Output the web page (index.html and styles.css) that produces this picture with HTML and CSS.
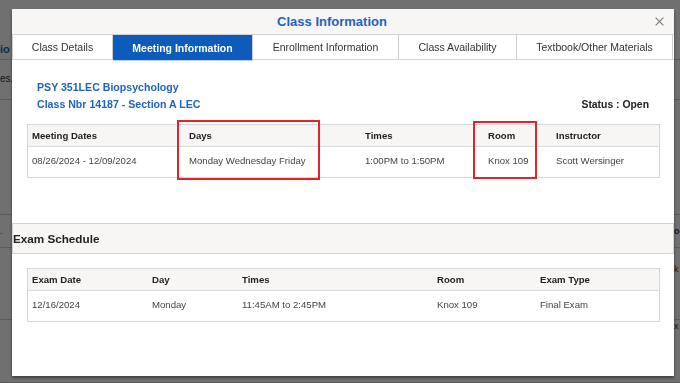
FILE: index.html
```html
<!DOCTYPE html>
<html lang="en">
<head>
<meta charset="utf-8">
<title>Class Information</title>
<link rel="stylesheet" href="styles.css">
</head>
<body>
<div class="page">
  <div class="bg-row r1"><span class="bg-link">io</span><span></span></div>
  <div class="bg-row r2"><span class="bg-text">es,</span><span></span></div>
  <div class="bg-row r3"><span></span><span></span></div>
  <div class="bg-row r4"><span class="bg-text">.</span><span class="bg-text bold">o</span></div>
  <div class="bg-row r5"><span></span><span class="bg-text">k</span></div>
  <div class="bg-row r6"><span></span><span class="bg-text">x</span></div>
</div>
<div class="overlay"></div>

<div class="modal" role="dialog" aria-label="Class Information">
  <div class="modal-head">
    <div class="modal-title">Class Information</div>
    <span class="close" aria-label="Close">
      <svg width="9" height="9" viewBox="0 0 9 9"><path d="M0.6 0.6 L8.4 8.4 M8.4 0.6 L0.6 8.4" stroke="#7a7a7a" stroke-width="1.1" fill="none"/></svg>
    </span>
  </div>
  <div class="tabs">
    <div class="tab">Class Details</div>
    <div class="tab active">Meeting Information</div>
    <div class="tab">Enrollment Information</div>
    <div class="tab">Class Availability</div>
    <div class="tab">Textbook/Other Materials</div>
  </div>

  <div class="section">
    <div class="course">
      <div class="course-row"><span>PSY 351LEC Biopsychology</span></div>
      <div class="course-row"><span>Class Nbr 14187 - Section A LEC</span><span class="status">Status : Open</span></div>
    </div>
    <div class="gtable meet">
      <div class="grow ghead">
        <div class="gcell">Meeting Dates</div>
        <div class="gcell">Days</div>
        <div class="gcell">Times</div>
        <div class="gcell">Room</div>
        <div class="gcell">Instructor</div>
      </div>
      <div class="grow gdata">
        <div class="gcell">08/26/2024 - 12/09/2024</div>
        <div class="gcell">Monday Wednesday Friday</div>
        <div class="gcell">1:00PM to 1:50PM</div>
        <div class="gcell">Knox 109</div>
        <div class="gcell">Scott Wersinger</div>
      </div>
      <div class="mark mark-days"></div>
      <div class="mark mark-room"></div>
    </div>
  </div>

  <div class="exam-head">Exam Schedule</div>

  <div class="section section2">
    <div class="gtable exam">
      <div class="grow ghead">
        <div class="gcell">Exam Date</div>
        <div class="gcell">Day</div>
        <div class="gcell">Times</div>
        <div class="gcell">Room</div>
        <div class="gcell">Exam Type</div>
      </div>
      <div class="grow gdata">
        <div class="gcell">12/16/2024</div>
        <div class="gcell">Monday</div>
        <div class="gcell">11:45AM to 2:45PM</div>
        <div class="gcell">Knox 109</div>
        <div class="gcell">Final Exam</div>
      </div>
    </div>
  </div>
</div>
</body>
</html>
```

FILE: styles.css
```css
* { box-sizing: border-box; }

html, body {
  margin: 0;
  height: 100%;
  overflow: hidden;
}

body {
  font-family: "Liberation Sans", Arial, sans-serif;
  background: #ffffff;
  color: #333;
}

/* underlying page */
.page {
  width: 680px;
}

.bg-row {
  display: grid;
  grid-template-columns: 674px 1fr;
  border-bottom: 1px solid #cfcfcf;
  font-size: 9px;
}

.r1 { height: 60px; align-items: end; padding-bottom: 4px; }
.r2 { height: 40px; align-items: center; padding-bottom: 2px; font-size: 10px; }
.r3 { height: 115px; }
.r4 { height: 33px; align-items: center; }
.r5 { height: 72px; padding-top: 16px; }
.r6 { height: 63px; padding-top: 1px; }

.bg-link {
  font-size: 11px;
  font-weight: bold;
  color: #1f5fb0;
}

.bg-text { color: #333; }
.bold { font-weight: bold; }

.overlay {
  position: fixed;
  inset: 0;
  background: rgba(0, 0, 0, 0.56);
}

/* modal */
.modal {
  position: fixed;
  left: 12px;
  top: 9px;
  width: 662px;
  height: 367px;
  background: #ffffff;
  box-shadow: 0 2px 3px rgba(0, 0, 0, 0.45);
  display: flex;
  flex-direction: column;
}

.modal-head {
  height: 26px;
  flex: none;
  background: #f7f6f4;
  border-bottom: 1px solid #d2d2d2;
  display: flex;
  align-items: center;
}

.modal-title {
  flex: 1;
  text-align: center;
  font-size: 13px;
  font-weight: bold;
  color: #1e64bc;
}

.close {
  width: 9px;
  height: 9px;
  margin: 0 10px 0 3px;
  display: flex;
}

.tabs {
  flex: none;
  height: 25px;
  display: grid;
  grid-template-columns: 101px 140px 146px 118px 156px;
  border-bottom: 1px solid #d6d6d6;
}

.tab {
  display: flex;
  align-items: center;
  justify-content: center;
  font-size: 10.5px;
  color: #333;
  border-right: 1px solid #cdcdcd;
  white-space: nowrap;
}

.tab:first-child { border-left: 1px solid #cdcdcd; }

.tab.active {
  background: #0d5cbc;
  color: #ffffff;
  font-weight: bold;
  margin-bottom: -1px;
  box-shadow: 0 1px 0 #b7d0ee;
}

.section {
  padding: 19px 14px 0 15px;
}

.course {
  padding: 0 11px 0 10px;
  font-size: 10.6px;
  font-weight: bold;
  line-height: 17px;
  color: #1e64bc;
}

.course-row {
  display: flex;
  justify-content: space-between;
}

.status {
  color: #222;
  font-size: 10.4px;
}

.gtable {
  position: relative;
  margin-top: 11px;
  border: 1px solid #d6d6d6;
  font-size: 9.6px;
  line-height: 12px;
}

.grow {
  display: grid;
}

.meet .grow { grid-template-columns: 157px 176px 123px 68px 1fr; }
.exam .grow { grid-template-columns: 120px 90px 195px 103px 1fr; }

.ghead {
  height: 22px;
  padding-top: 5px;
  background: #f7f6f4;
  border-bottom: 1px solid #dcdcdc;
  font-weight: bold;
  color: #222;
}

.gdata {
  height: 30px;
  padding-top: 8px;
  color: #444;
}

.gcell {
  padding-left: 4px;
  white-space: nowrap;
}

.mark {
  position: absolute;
  border: 2px solid #e2232b;
}

.mark-days {
  left: 149px;
  top: -5px;
  width: 143px;
  height: 60px;
}

.mark-room {
  left: 445px;
  top: -4px;
  width: 64px;
  height: 58px;
}

.exam-head {
  flex: none;
  margin-top: 45px;
  height: 31px;
  background: #f7f6f4;
  border: 1px solid #d2d2d2;
  display: flex;
  align-items: center;
  padding-left: 0;
  font-size: 11.7px;
  font-weight: bold;
  color: #222;
}

.section2 {
  padding-top: 14px;
}

.section2 .gtable { margin-top: 0; }
```
